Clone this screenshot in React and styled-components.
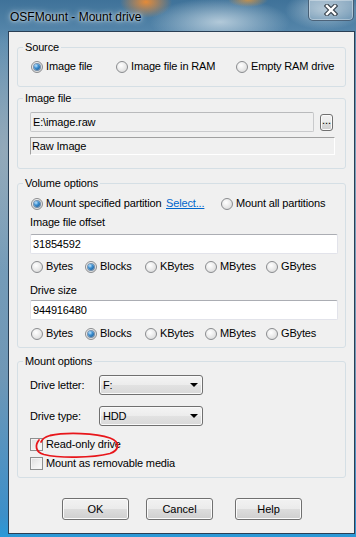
import React from "react";
import styled, { createGlobalStyle } from "styled-components";

const GlobalStyle = createGlobalStyle`
  html, body {
    margin: 0;
    padding: 0;
  }
  body {
    width: 356px;
    height: 537px;
    overflow: hidden;
  }
`;

const Desktop = styled.div`
  width: 356px;
  height: 537px;
  display: flex;
  flex-direction: column;
  box-sizing: border-box;
  font-family: "Liberation Sans", Arial, sans-serif;
  font-size: 11px;
  letter-spacing: -0.15px;
  color: #000;
  background:
    radial-gradient(ellipse 26px 16px at 146px 2px, rgba(236, 140, 52, 0.95), rgba(236, 140, 52, 0)),
    radial-gradient(ellipse 20px 7px at 248px 0px, rgba(214, 150, 70, 0.85), rgba(214, 150, 70, 0)),
    radial-gradient(ellipse 70px 24px at 220px 22px, rgba(196, 214, 226, 0.85), rgba(196, 214, 226, 0)),
    radial-gradient(ellipse 40px 20px at 325px 10px, rgba(180, 200, 214, 0.8), rgba(180, 200, 214, 0)),
    radial-gradient(ellipse 30px 120px at 4px 150px, rgba(150, 170, 185, 0.9), rgba(150, 170, 185, 0)),
    linear-gradient(180deg, #3f7299 0%, #5d8db0 8%, #7aa0bb 30%, #6f97b6 70%, #3d8fc9 96%, #2a9ad8 100%);
`;

const TitleBar = styled.div`
  height: 31px;
  display: flex;
  align-items: flex-start;
  padding-left: 10px;
  flex-shrink: 0;
`;

const Title = styled.div`
  margin-top: 10px;
  font-size: 12px;
  letter-spacing: 0;
  line-height: 14px;
  color: #000;
  text-shadow: 0 0 6px rgba(255, 255, 255, 0.9), 0 0 3px rgba(255, 255, 255, 0.8);
`;

const CloseButton = styled.div`
  margin-left: auto;
  margin-right: 2px;
  width: 46px;
  height: 21px;
  box-sizing: border-box;
  border: 1px solid rgba(40, 62, 84, 0.7);
  border-top: none;
  border-radius: 0 0 5px 5px;
  background: linear-gradient(180deg, rgba(255, 255, 255, 0.35), rgba(255, 255, 255, 0.12));
  box-shadow: inset 0 0 0 1px rgba(255, 255, 255, 0.35);
  display: flex;
  align-items: center;
  justify-content: center;
`;

const Client = styled.div`
  flex: 1;
  margin: 0 1px 3px 8px;
  border: 1px solid #2a3f55;
  background: #f0f0f0;
  padding: 9px 8px 0 8px;
  display: flex;
  flex-direction: column;
`;

const Group = styled.fieldset`
  margin: ${(p) => p.$mt || 0}px 0 0 0;
  padding: ${(p) => p.$pt}px 12px ${(p) => p.$pb}px 12px;
  border: 1px solid #d5dfe5;
  border-radius: 3px;
  min-width: 0;
  display: flex;
  flex-direction: column;
`;

const Legend = styled.legend`
  padding: 0 2px;
  margin-left: -7px;
  line-height: 13px;
  height: 13px;
`;

const OptionRow = styled.div`
  display: grid;
  grid-template-columns: ${(p) => p.$cols};
  align-items: center;
  height: 13px;
  margin-top: ${(p) => p.$mt || 0}px;
  white-space: nowrap;
`;

const Option = styled.label`
  display: inline-flex;
  align-items: center;
  height: 13px;
  line-height: 13px;
`;

const Radio = styled.span`
  width: 12px;
  height: 12px;
  margin: 0 3px 0 1px;
  box-sizing: border-box;
  border-radius: 50%;
  border: 1px solid #8a8c8f;
  background: radial-gradient(circle at 40% 35%, #ffffff 0%, #ececec 45%, #d2d2d2 100%);
  display: flex;
  align-items: center;
  justify-content: center;
  flex-shrink: 0;

  &::after {
    content: "";
    display: ${(p) => (p.$checked ? "block" : "none")};
    width: 6px;
    height: 6px;
    border-radius: 50%;
    background: radial-gradient(circle at 35% 30%, #bfe4ff 0%, #3c8fd0 40%, #0d4a86 100%);
    box-shadow: 0 0 0 1px rgba(20, 70, 120, 0.55);
  }
`;

const Check = styled.span`
  width: 13px;
  height: 13px;
  margin-right: 3px;
  box-sizing: border-box;
  border: 1px solid #8e8f8f;
  background: linear-gradient(135deg, #dcdcdc 0%, #eeeeee 50%, #fbfbfb 100%);
  box-shadow: inset 0 0 0 1px #f4f4f4;
  flex-shrink: 0;
`;

const Link = styled.span`
  color: #0066cc;
  text-decoration: underline;
  line-height: 13px;
`;

const FieldLabel = styled.div`
  line-height: 13px;
  height: 13px;
  margin-top: ${(p) => p.$mt || 0}px;
`;

const TextBox = styled.div`
  height: 20px;
  width: ${(p) => p.$w}px;
  margin-top: ${(p) => p.$mt || 0}px;
  box-sizing: border-box;
  padding-left: 2px;
  display: flex;
  align-items: center;
  background: ${(p) => (p.$disabled ? "#f0f0f0" : "#ffffff")};
  border: 1px solid ${(p) => (p.$disabled ? "#c9cacc" : "#e2e3ea")};
  border-top-color: ${(p) => (p.$disabled ? "#b9babc" : "#abadb3")};
  border-radius: 2px;
  flex-shrink: 0;
`;

const StaticBox = styled.div`
  height: 18px;
  width: 305px;
  margin-top: 5px;
  box-sizing: border-box;
  padding-left: 1px;
  display: flex;
  align-items: center;
  border: 1px solid #ffffff;
  border-top-color: #a0a0a0;
  border-left-color: #a0a0a0;
`;

const FileRow = styled.div`
  display: flex;
  align-items: flex-start;
`;

const PushButton = styled.button`
  box-sizing: border-box;
  width: ${(p) => p.$w}px;
  height: ${(p) => p.$h}px;
  margin: ${(p) => p.$mt || 0}px 0 0 ${(p) => p.$ml || 0}px;
  padding: 0;
  border: 1px solid #707070;
  border-radius: 3px;
  background: linear-gradient(180deg, #f2f2f2 0%, #ebebeb 50%, #dddddd 50%, #cfcfcf 100%);
  box-shadow: inset 0 0 0 1px #fbfbfb;
  font-family: "Liberation Sans", Arial, sans-serif;
  font-size: 11px;
  letter-spacing: 0;
  color: #000;
  display: flex;
  align-items: ${(p) => (p.$dots ? "flex-end" : "center")};
  justify-content: center;
  padding-bottom: ${(p) => (p.$dots ? "3px" : "0")};
  line-height: 13px;
`;

const ComboRow = styled.div`
  display: grid;
  grid-template-columns: 69px 104px;
  align-items: center;
  margin-top: ${(p) => p.$mt || 0}px;
`;

const Combo = styled.div`
  height: 20px;
  box-sizing: border-box;
  border: 1px solid #707070;
  border-radius: 3px;
  background: linear-gradient(180deg, #f4f4f4 0%, #ececec 50%, #e2e2e2 50%, #d9d9d9 100%);
  box-shadow: inset 0 0 0 1px #fafafa;
  display: flex;
  align-items: center;
  padding: 0 4px 0 3px;
`;

const Arrow = styled.span`
  margin-left: auto;
  width: 0;
  height: 0;
  border-left: 4px solid transparent;
  border-right: 4px solid transparent;
  border-top: 4px solid #000;
`;

const CheckRow = styled.div`
  position: relative;
  display: flex;
  margin-top: ${(p) => p.$mt || 0}px;
`;

const Annotation = styled.svg`
  position: absolute;
  left: 0;
  top: -10px;
  width: 100px;
  height: 34px;
  overflow: visible;
  pointer-events: none;
`;

const ButtonRow = styled.div`
  display: flex;
  margin-top: 20px;
  padding-left: 45px;
`;

const unitCols = "54px 60px 60px 61px auto";
const units = ["Bytes", "Blocks", "KBytes", "MBytes", "GBytes"];

const Units = ({ mt }) => (
  <OptionRow $cols={unitCols} $mt={mt}>
    {units.map((u) => (
      <Option key={u}>
        <Radio $checked={u === "Blocks"} />
        {u}
      </Option>
    ))}
  </OptionRow>
);

export default function App() {
  return (
    <Desktop>
      <GlobalStyle />
      <TitleBar>
        <Title>OSFMount - Mount drive</Title>
        <CloseButton>
          <svg width="14" height="12" viewBox="0 0 14 12">
            <path d="M3 2 L11 10 M11 2 L3 10" stroke="#3b4650" strokeWidth="4.6" strokeLinecap="square" />
            <path d="M3 2 L11 10 M11 2 L3 10" stroke="#ffffff" strokeWidth="2.4" strokeLinecap="square" />
          </svg>
        </CloseButton>
      </TitleBar>

      <Client>
        <Group $pt={6} $pb={13}>
          <Legend>Source</Legend>
          <OptionRow $cols="85px 120px auto">
            <Option>
              <Radio $checked />
              Image file
            </Option>
            <Option>
              <Radio />
              Image file in RAM
            </Option>
            <Option>
              <Radio />
              Empty RAM drive
            </Option>
          </OptionRow>
        </Group>

        <Group $mt={5} $pt={7} $pb={13}>
          <Legend>Image file</Legend>
          <FileRow>
            <TextBox $w={284} $disabled>
              E:\image.raw
            </TextBox>
            <PushButton $w={18} $h={17} $mt={2} $ml={6} $dots>
              ...
            </PushButton>
          </FileRow>
          <StaticBox>Raw Image</StaticBox>
        </Group>

        <Group $mt={8} $pt={7} $pb={7}>
          <Legend>Volume options</Legend>
          <OptionRow $cols="136px 54px auto">
            <Option>
              <Radio $checked />
              Mount specified partition
            </Option>
            <Link>Select...</Link>
            <Option>
              <Radio />
              Mount all partitions
            </Option>
          </OptionRow>
          <FieldLabel $mt={6}>Image file offset</FieldLabel>
          <TextBox $w={308} $mt={5}>
            31854592
          </TextBox>
          <Units mt={6} />
          <FieldLabel $mt={11}>Drive size</FieldLabel>
          <TextBox $w={308} $mt={3}>
            944916480
          </TextBox>
          <Units mt={7} />
        </Group>

        <Group $mt={7} $pt={7} $pb={7}>
          <Legend>Mount options</Legend>
          <ComboRow>
            <span>Drive letter:</span>
            <Combo>
              F:
              <Arrow />
            </Combo>
          </ComboRow>
          <ComboRow $mt={11}>
            <span>Drive type:</span>
            <Combo>
              HDD
              <Arrow />
            </Combo>
          </ComboRow>
          <CheckRow $mt={12}>
            <Option>
              <Check />
              Read-only drive
            </Option>
            <Annotation viewBox="0 0 100 34">
              <path
                d="M9 12 C5 17, 5 24, 14 26.5 C30 30.5, 62 30, 80 25.5 C89 22.5, 91 14, 80 10 C66 5, 36 4, 20 7.5 C15 9, 12 11, 11 14"
                fill="none"
                stroke="#e8161b"
                strokeWidth="1.8"
                strokeLinecap="round"
              />
            </Annotation>
          </CheckRow>
          <CheckRow $mt={6}>
            <Option>
              <Check />
              Mount as removable media
            </Option>
          </CheckRow>
        </Group>

        <ButtonRow>
          <PushButton $w={67} $h={22}>OK</PushButton>
          <PushButton $w={67} $h={22} $ml={17}>Cancel</PushButton>
          <PushButton $w={67} $h={22} $ml={22}>Help</PushButton>
        </ButtonRow>
      </Client>
    </Desktop>
  );
}
